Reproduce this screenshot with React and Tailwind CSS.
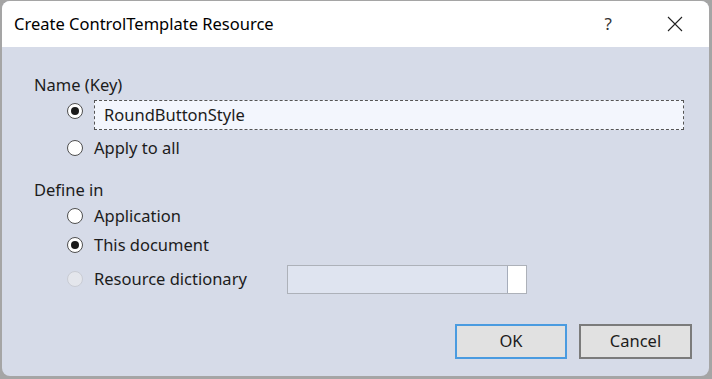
import React from 'react';

const Radio = ({ checked, disabled }) => (
  <span
    className={`shrink-0 w-[16px] h-[16px] rounded-full border flex items-center justify-center ${
      disabled ? 'border-[#c9ccd4] bg-[#e4e6ec]' : 'border-[#4f4f4f] bg-white'
    }`}
  >
    {checked && <span className="w-[8px] h-[8px] rounded-full bg-[#1b1b1b]" />}
  </span>
);

const App = () => {
  return (
    <div className="w-[712px] h-[379px] bg-[#a5a5a5] pl-[2px] pt-[1px] pr-[3px] pb-[3px] font-['Noto_Sans',sans-serif]">
      <div className="h-full rounded-[8px] overflow-hidden flex flex-col bg-[#d6dbe8] text-[#1c1c1c]">
        <div className="h-[46px] shrink-0 bg-white flex items-center pl-[12px] pr-[26px]">
          <span className="text-[16.5px] text-black flex-1">Create ControlTemplate Resource</span>
          <span className="text-[17px] text-[#333] mr-[55px]">?</span>
          <svg width="16" height="16" viewBox="0 0 16 16" className="text-[#222]">
            <path d="M1 1 L15 15 M15 1 L1 15" stroke="currentColor" strokeWidth="1.1" fill="none" />
          </svg>
        </div>

        <div className="flex-1 flex flex-col pl-[32px] pr-[17px] text-[16.5px]">
          <div className="mt-[26px] h-[24px] leading-[24px]">Name (Key)</div>

          <div className="mt-[3px] flex items-start pl-[33px]">
            <span className="mt-[3px]"><Radio checked /></span>
            <div className="ml-[11px] w-[590px] h-[30px] border border-dashed border-[#555] bg-[#f3f6fd] flex items-center pl-[9px]">
              RoundButtonStyle
            </div>
          </div>

          <div className="mt-[6px] h-[24px] flex items-center pl-[33px]">
            <Radio />
            <span className="ml-[11px]">Apply to all</span>
          </div>

          <div className="mt-[18px] h-[24px] leading-[24px]">Define in</div>

          <div className="mt-[1px] h-[26px] flex items-center pl-[33px]">
            <Radio />
            <span className="ml-[11px]">Application</span>
          </div>
          <div className="mt-[3px] h-[26px] flex items-center pl-[33px]">
            <Radio checked />
            <span className="ml-[11px]">This document</span>
          </div>
          <div className="mt-[6px] h-[30px] flex items-center pl-[33px]">
            <Radio disabled />
            <span className="ml-[11px] w-[193px]">Resource dictionary</span>
            <div className="w-[240px] h-[29px] border-[1.5px] border-[#adb1b9] bg-[#dfe4f0] flex justify-end">
              <div className="w-[19px] h-full bg-white border-l-[1.5px] border-[#a6adbb]" />
            </div>
          </div>

          <div className="mt-auto mb-[17px] flex justify-end gap-[12px]">
            <button className="w-[112px] h-[35px] border-2 border-[#4a9be0] bg-[#e1e1e1] text-[16.5px] text-[#1c1c1c]">OK</button>
            <button className="w-[113px] h-[35px] border-2 border-[#7b7b7b] bg-[#e1e1e1] text-[16.5px] text-[#1c1c1c]">Cancel</button>
          </div>
        </div>
      </div>
    </div>
  );
};

export default App;
